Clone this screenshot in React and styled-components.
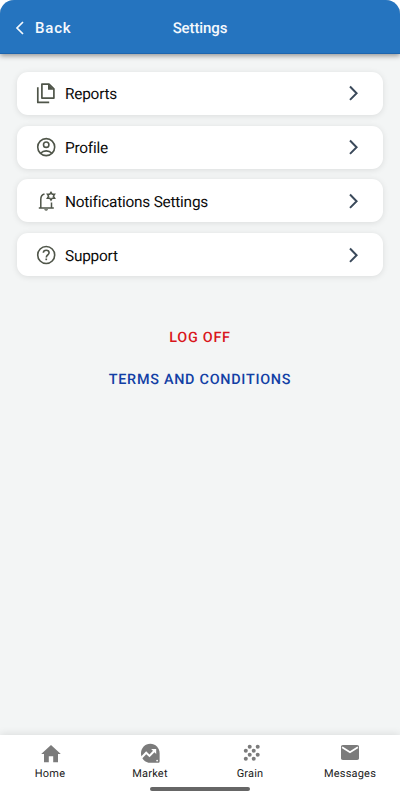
import React from "react";
import styled, { createGlobalStyle } from "styled-components";

const GlobalStyle = createGlobalStyle`
  * {
    box-sizing: border-box;
  }
  body {
    margin: 0;
    background: #ffffff;
    font-family: Roboto, "Liberation Sans", sans-serif;
    text-rendering: geometricPrecision;
  }
`;

const StyledScreen = styled.div`
  display: flex;
  flex-direction: column;
  width: 400px;
  height: 800px;
  overflow: hidden;
  border-radius: 14px 14px 0 0;
  background: #f3f5f5;
`;

const StyledHeader = styled.header`
  display: grid;
  grid-template-columns: 1fr auto 1fr;
  align-items: center;
  height: 54px;
  padding: 2px 14px 0;
  color: #f5f9fd;
  background: #2574bf;
  border-bottom: 1px solid #1d65ae;
  box-shadow: 0 2px 5px rgba(0, 0, 0, 0.38);
`;

const StyledBack = styled.button`
  display: flex;
  align-items: center;
  gap: 9px;
  padding: 0;
  border: 0;
  background: none;
  color: inherit;
  font: 500 15px Roboto, sans-serif;
  letter-spacing: 0.8px;
`;

const StyledTitle = styled.h1`
  margin: 0;
  font-size: 15px;
  font-weight: 500;
  letter-spacing: -0.1px;
`;

const StyledContent = styled.main`
  display: flex;
  flex: 1;
  flex-direction: column;
  padding: 18px 17px 0;
`;

const StyledList = styled.div`
  display: flex;
  flex-direction: column;
  gap: 10.8px;
`;

const StyledRow = styled.div`
  display: flex;
  align-items: center;
  height: 42.9px;
  padding: 0 21px 0 17px;
  border-radius: 11px;
  background: #ffffff;
  box-shadow: 0 1px 6px rgba(0, 0, 0, 0.1);
`;

const StyledLabel = styled.span`
  flex: 1;
  margin-left: 7px;
  padding-top: 2px;
  color: #0c0c0c;
  font-size: 15.4px;
  letter-spacing: -0.23px;
`;

const StyledLinks = styled.div`
  display: flex;
  flex-direction: column;
  align-items: center;
  gap: 22px;
  margin-top: 52px;
`;

const StyledLink = styled.a`
  color: ${(props) => props.$color};
  font-size: 14.4px;
  font-weight: 500;
  line-height: 20px;
  letter-spacing: 0.72px;
`;

const StyledFooter = styled.footer`
  display: flex;
  flex-direction: column;
  align-items: center;
  height: 65px;
  background: #ffffff;
  box-shadow: 0 -1px 8px rgba(0, 0, 0, 0.1);
`;

const StyledTabs = styled.nav`
  display: grid;
  grid-template-columns: repeat(4, 1fr);
  width: 100%;
  height: 52px;
  padding-top: 7px;
`;

const StyledTab = styled.div`
  display: flex;
  flex-direction: column;
  align-items: center;
  color: #1c1c1c;
  font-size: 11px;
  line-height: 15px;
  letter-spacing: 0.2px;
`;

const StyledHomeBar = styled.div`
  width: 100px;
  height: 4px;
  border-radius: 2px;
  background: #666666;
`;

const StyledSvg = styled.svg`
  display: block;
  flex: none;
`;

const OutlineIcon = ({ children }) => (
  <StyledSvg
    width="24"
    height="24"
    viewBox="0 0 24 24"
    fill="none"
    stroke="#4f5549"
    strokeWidth="1.6"
  >
    {children}
  </StyledSvg>
);

const TabIcon = ({ children }) => (
  <StyledSvg width="24" height="24" viewBox="0 0 24 24" fill="#7b7b7b">
    {children}
  </StyledSvg>
);

const ReportsIcon = () => (
  <OutlineIcon>
    <path
      d="M7.9 3.1H15L19.9 7.9V17.1H7.9ZM3.8 6.3V21.4H15.2"
      strokeWidth="1.7"
      strokeLinejoin="round"
    />
    <path d="M14 2.8V8.8H20Z" fill="#4f5549" stroke="none" />
  </OutlineIcon>
);

const ProfileIcon = () => (
  <OutlineIcon>
    <circle cx="12.2" cy="12.1" r="8.5" />
    <circle cx="12.2" cy="9.7" r="2.7" />
    <path d="M6.5 18.2C9.6 15.1 14.8 15.1 17.9 18.2" />
  </OutlineIcon>
);

const NotificationsIcon = () => (
  <OutlineIcon>
    <path
      d="M4.8 18.9H19.8M6.8 18.9V10.3C6.8 7.2 8.2 5.6 10.5 5M17.5 13.6V18.9"
      strokeWidth="1.5"
    />
    <path d="M10.2 20.3H14.1C14 22.2 10.3 22.2 10.2 20.3Z" fill="#4f5549" stroke="none" />
    <path
      d="M17 3.3L18.2 5.2H20.6L19.4 7.2L20.6 9.2H18.2L17 11.1L15.8 9.2H13.4L14.6 7.2L13.4 5.2H15.8Z"
      strokeWidth="1.5"
    />
  </OutlineIcon>
);

const SupportIcon = () => (
  <OutlineIcon>
    <circle cx="12.2" cy="12" r="8.5" />
    <path d="M9.3 9.8C9.4 8.1 10.6 7.2 12.2 7.2C13.9 7.2 15.1 8.3 15.1 9.8C15.1 11.8 12.3 12 12.3 14.4" />
    <path d="M11.4 15.5H13.1V17.2H11.4Z" fill="#4f5549" stroke="none" />
  </OutlineIcon>
);

const HomeIcon = () => (
  <TabIcon>
    <path d="M13 2.9L3.2 12.1H6V20.2H10.8V14.2H15.2V20.2H20V12.1H22.8Z" />
  </TabIcon>
);

const MarketIcon = () => (
  <TabIcon>
    <path d="M12.3 1.8C17.4 1.8 21.6 6 21.6 11.2V19.2C21.6 20.2 21 20.8 20 20.8H12.3C7 20.8 3 16.5 3 11.2C3 6 7.1 1.8 12.3 1.8Z" />
    <path
      d="M3.4 15.7L8.2 10.8L11.5 13.9L16.2 9.1"
      fill="none"
      stroke="#ffffff"
      strokeWidth="2.1"
    />
    <path d="M13.1 7H18.2V12.1Z" fill="#ffffff" />
    <circle cx="19.1" cy="18.6" r="0.9" fill="#ffffff" />
  </TabIcon>
);

const grainDots = [
  [11.7, 4.7], [19.7, 4.7],
  [7.8, 8.7], [15.7, 8.7],
  [11.7, 12.7], [19.7, 12.7],
  [7.8, 16.7], [15.7, 16.7],
];

const GrainIcon = () => (
  <TabIcon>
    {grainDots.map(([x, y]) => (
      <circle key={`${x}-${y}`} cx={x} cy={y} r="2" />
    ))}
  </TabIcon>
);

const MessagesIcon = () => (
  <TabIcon>
    <path d="M4.8 3H19.2C20.2 3 21 3.8 21 4.8V16.3C21 17.3 20.2 18 19.2 18H4.8C3.8 18 3 17.3 3 16.3V4.8C3 3.8 3.8 3 4.8 3Z" />
    <path d="M4.1 5.3L12 10.3L19.9 5.3" fill="none" stroke="#ffffff" strokeWidth="1.8" />
  </TabIcon>
);

const settings = [
  { name: "Reports", icon: <ReportsIcon /> },
  { name: "Profile", icon: <ProfileIcon /> },
  { name: "Notifications Settings", icon: <NotificationsIcon /> },
  { name: "Support", icon: <SupportIcon /> },
];

const tabs = [
  { name: "Home", icon: <HomeIcon /> },
  { name: "Market", icon: <MarketIcon /> },
  { name: "Grain", icon: <GrainIcon /> },
  { name: "Messages", icon: <MessagesIcon /> },
];

const App = () => (
  <>
    <GlobalStyle />
    <StyledScreen>
      <StyledHeader>
        <StyledBack>
          <StyledSvg width="12" height="16" viewBox="0 0 12 16" fill="none">
            <path d="M9 2L3 8L9 14" stroke="currentColor" strokeWidth="1.7" />
          </StyledSvg>
          Back
        </StyledBack>
        <StyledTitle>Settings</StyledTitle>
      </StyledHeader>
      <StyledContent>
        <StyledList>
          {settings.map((item) => (
            <StyledRow key={item.name}>
              {item.icon}
              <StyledLabel>{item.name}</StyledLabel>
              <StyledSvg width="16" height="18" viewBox="0 0 16 18" fill="none">
                <path d="M4 2.5L10.6 9.2L4 15.9" stroke="#3b4a5b" strokeWidth="2" />
              </StyledSvg>
            </StyledRow>
          ))}
        </StyledList>
        <StyledLinks>
          <StyledLink $color="#d9161c">LOG OFF</StyledLink>
          <StyledLink $color="#123fa5">TERMS AND CONDITIONS</StyledLink>
        </StyledLinks>
      </StyledContent>
      <StyledFooter>
        <StyledTabs>
          {tabs.map((tab) => (
            <StyledTab key={tab.name}>
              {tab.icon}
              {tab.name}
            </StyledTab>
          ))}
        </StyledTabs>
        <StyledHomeBar />
      </StyledFooter>
    </StyledScreen>
  </>
);

export default App;
